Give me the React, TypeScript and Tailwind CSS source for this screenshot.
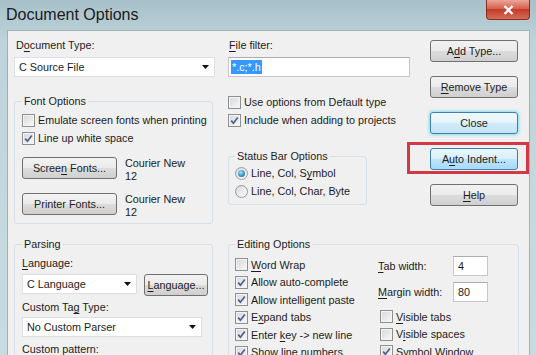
import type { ReactNode } from "react"

const font = { fontFamily: '"Liberation Sans", Arial, sans-serif' }

function U({ children }: { children: ReactNode }) {
  return <span className="underline underline-offset-[2px] decoration-[1px]">{children}</span>
}

function Check({ checked = false }: { checked?: boolean }) {
  return (
    <span className="relative flex h-[13px] w-[13px] shrink-0 items-center justify-center border border-[#8e8f8f] bg-[linear-gradient(135deg,#d6d8db,#f8f8f8)] shadow-[inset_0_0_0_1px_#f4f4f4]">
      {checked && (
        <svg width="11" height="11" viewBox="0 0 11 11">
          <path d="M2.2 5.6 L4.4 8.2 L8.8 2.4" fill="none" stroke="#4b5f8f" strokeWidth="1.7" />
        </svg>
      )}
    </span>
  )
}

function Radio({ checked = false }: { checked?: boolean }) {
  return (
    <span className="flex h-[13px] w-[13px] shrink-0 items-center justify-center rounded-full border border-[#9a9b9c] bg-[linear-gradient(135deg,#d9dadb,#fbfbfb)]">
      {checked && (
        <span className="h-[7px] w-[7px] rounded-full bg-[radial-gradient(circle_at_40%_35%,#a8e4f6,#3e93c4_55%,#1c5c89)]" />
      )}
    </span>
  )
}

function CheckRow({ checked, children, h = "h-[18px]" }: { checked?: boolean; children: ReactNode; h?: string }) {
  return (
    <div className={`flex items-center gap-[3px] ${h}`}>
      <Check checked={checked} />
      <span className="whitespace-nowrap">{children}</span>
    </div>
  )
}

function Button({ children, kind = "normal", className = "" }: { children: ReactNode; kind?: "normal" | "default" | "hot"; className?: string }) {
  const look =
    kind === "default"
      ? "border-[#3c7fb1] bg-[linear-gradient(#f1f8fc,#e4f3fb_49%,#d3ecf9_50%,#c4e4f5)] shadow-[0_0_3px_1px_#7fe0ee]"
      : kind === "hot"
        ? "border-[#3c7fb1] bg-[linear-gradient(#eaf6fd,#d9f0fc_49%,#bee6fd_50%,#a7d9f5)]"
        : "border-[#707070] bg-[linear-gradient(#f2f2f2,#ebebeb_49%,#dddddd_50%,#cfcfcf)]"
  return (
    <div className={`flex h-[22px] shrink-0 items-center justify-center rounded-[3px] border whitespace-nowrap ${look} ${className}`}>
      <span>{children}</span>
    </div>
  )
}

function Select({ value, className = "" }: { value: string; className?: string }) {
  return (
    <div className={`flex h-[20px] shrink-0 items-center justify-between border border-[#dcdfe3] bg-white pl-[4px] pr-[5px] ${className}`}>
      <span className="whitespace-nowrap">{value}</span>
      <svg width="7" height="4" viewBox="0 0 7 4">
        <path d="M0 0 H7 L3.5 4 Z" fill="#111" />
      </svg>
    </div>
  )
}

function Group({ title, className = "", children }: { title: string; className?: string; children: ReactNode }) {
  return (
    <fieldset className={`min-w-0 rounded-[3px] border border-[#d5dfe5] ${className}`}>
      <legend className="px-[2px] leading-[14px]">{title}</legend>
      {children}
    </fieldset>
  )
}

function Field({ value, className = "" }: { value: string; className?: string }) {
  return (
    <div className={`flex h-[20px] items-center border border-[#c3c8ce] border-t-[#abadb3] bg-white pl-[4px] ${className}`}>
      {value}
    </div>
  )
}

export default function App() {
  return (
    <div
      className="relative h-[355px] w-[536px] overflow-hidden bg-[linear-gradient(180deg,#a7c0c9,#bfd4da_12%,#c8dbe0)] text-[10.8px] text-[#1c1c1c]"
      style={font}
    >
      {/* Title bar */}
      <div className="flex h-[30px] items-start justify-between">
        <div className="pl-[6px] pt-[6px] text-[16px] leading-[18px] text-[#1a1a1a]">Document Options</div>
        <div className="mr-[6px] flex h-[20px] w-[44px] items-center justify-center rounded-b-[4px] border border-t-0 border-[#8b2d24] bg-[linear-gradient(#eaa699,#d8604d_45%,#c23b2b_50%,#d66d55)]">
          <svg width="11" height="10" viewBox="0 0 11 10">
            <path d="M1.5 1 L9.5 9 M9.5 1 L1.5 9" stroke="#fff" strokeWidth="2.4" />
          </svg>
        </div>
      </div>

      {/* Body */}
      <div className="ml-[7px] mr-[6px] h-[330px] border border-[#9fb0ba] bg-[#f0f0f0] pl-[6px] pt-[7px]">
        <div className="flex">
          {/* Left column */}
          <div className="w-[201px]">
            <div className="h-[14px] pl-[2px] leading-[14px]">
              D<U>o</U>cument Type:
            </div>
            <Select value="C Source File" className="mt-[5px] w-[201px]" />
            <Group title="Font Options" className="mt-[17px] w-[199px] px-[7px] pb-[4px]">
              <div className="mt-[3px]">
                <CheckRow>Emulate screen fonts when printing</CheckRow>
                <CheckRow checked>Line up white space</CheckRow>
              </div>
              <div className="mt-[10px] flex items-start">
                <Button className="w-[95px]">
                  Scree<U>n</U> Fonts...
                </Button>
                <div className="ml-[8px] leading-[13px]">
                  <div>Courier New</div>
                  <div>12</div>
                </div>
              </div>
              <div className="mt-[10px] flex items-start">
                <Button className="w-[95px]">Printer Fonts...</Button>
                <div className="ml-[8px] leading-[13px]">
                  <div>Courier New</div>
                  <div>12</div>
                </div>
              </div>
            </Group>
          </div>

          {/* Middle column */}
          <div className="ml-[13px] w-[182px]">
            <div className="h-[14px] pl-[1px] leading-[14px]">
              <U>F</U>ile filter:
            </div>
            <div className="mt-[5px] flex h-[20px] items-center border border-[#c3c8ce] border-t-[#abadb3] bg-white pl-[2px]">
              <span className="bg-[#3399ff] px-[1px] leading-[14px] text-white">*.c;*.h</span>
            </div>
            <div className="mt-[16px]">
              <CheckRow>Use options from Default type</CheckRow>
              <CheckRow checked>Include when adding to projects</CheckRow>
            </div>
            <Group title="Status Bar Options" className="mt-[20px] w-[139px] px-[6px] pb-[4px]">
              <div className="mt-[1px]">
                <div className="flex h-[18px] items-center gap-[3px]">
                  <Radio checked />
                  <span>
                    Line, Col, S<U>y</U>mbol
                  </span>
                </div>
                <div className="flex h-[18px] items-center gap-[3px]">
                  <Radio />
                  <span>Line, Col, Char, Byte</span>
                </div>
              </div>
            </Group>
          </div>

          {/* Right column */}
          <div className="ml-[20px] flex w-[88px] flex-col gap-[14px] pt-[2px]">
            <Button>
              A<U>d</U>d Type...
            </Button>
            <Button>
              <U>R</U>emove Type
            </Button>
            <Button kind="default">Close</Button>
            <div className="relative">
              <Button kind="hot">
                A<U>u</U>to Indent...
              </Button>
              <div className="absolute -bottom-[4px] -left-[23px] -right-[11px] -top-[6px] border-[3px] border-[#d13a44]" />
            </div>
            <Button>
              <U>H</U>elp
            </Button>
          </div>
        </div>

        {/* Bottom section */}
        <div className="mt-[13px] flex items-start">
          <Group title="Parsing" className="w-[199px] pb-[8px] pl-[7px] pr-[2px]">
            <div className="mt-[5px] h-[14px] leading-[14px]">
              <U>L</U>anguage:
            </div>
            <div className="mt-[4px] flex items-start">
              <Select value="C Language" className="w-[115px]" />
              <Button className="ml-[7px] w-[64px]">
                <U>L</U>anguage...
              </Button>
            </div>
            <div className="mt-[4px] h-[14px] leading-[14px]">
              Custom Ta<U>g</U> Type:
            </div>
            <Select value="No Custom Parser" className="mt-[3px] w-[180px]" />
            <div className="mt-[5px] h-[14px] leading-[14px]">Custom pattern:</div>
          </Group>

          <Group title="Editing Options" className="ml-[15px] w-[291px] px-[6px] pb-[8px]">
            <div className="mt-[5px] flex">
              <div className="w-[143px]">
                <CheckRow h="h-[17.5px]">
                  <U>W</U>ord Wrap
                </CheckRow>
                <CheckRow checked h="h-[17.5px]">
                  Allow auto-complete
                </CheckRow>
                <CheckRow checked h="h-[17.5px]">
                  Allow intelligent paste
                </CheckRow>
                <CheckRow checked h="h-[17.5px]">
                  E<U>x</U>pand tabs
                </CheckRow>
                <CheckRow checked h="h-[17.5px]">
                  Enter <U>k</U>ey -&gt; new line
                </CheckRow>
                <CheckRow checked h="h-[17.5px]">
                  Show line numbers
                </CheckRow>
              </div>
              <div className="w-[130px]">
                <div className="flex h-[20px] items-center">
                  <span className="w-[75px]">
                    <U>T</U>ab width:
                  </span>
                  <Field value="4" className="w-[35px]" />
                </div>
                <div className="mt-[6px] flex h-[20px] items-center">
                  <span className="w-[75px]">
                    <U>M</U>argin width:
                  </span>
                  <Field value="80" className="w-[35px]" />
                </div>
                <div className="mt-[6px] pl-[2px]">
                  <CheckRow h="h-[17.5px]">
                    <U>V</U>isible tabs
                  </CheckRow>
                  <CheckRow h="h-[17.5px]">
                    V<U>i</U>sible spaces
                  </CheckRow>
                  <CheckRow checked h="h-[17.5px]">
                    Symbol Window
                  </CheckRow>
                </div>
              </div>
            </div>
          </Group>
        </div>
      </div>
    </div>
  )
}
